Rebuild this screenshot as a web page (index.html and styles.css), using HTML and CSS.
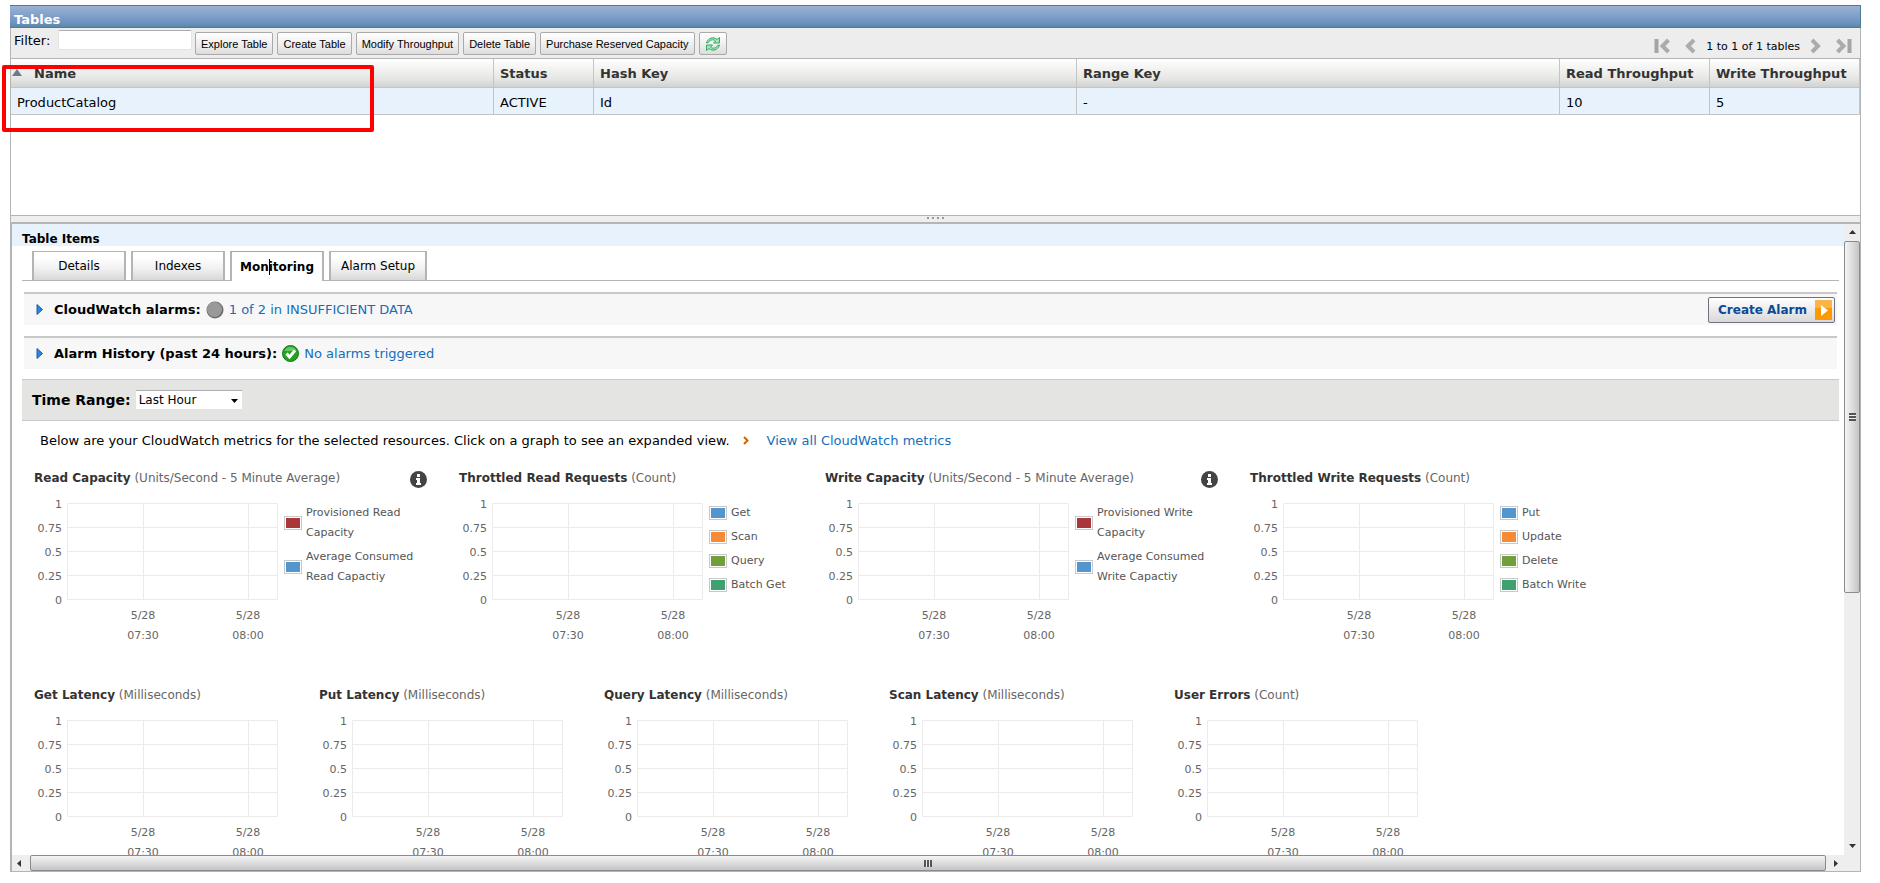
FILE: index.html
```html
<!DOCTYPE html>
<html lang="en">
<head>
    <meta charset="UTF-8">
    <meta name="viewport" content="width=device-width, initial-scale=1.0">
    <title>DynamoDB Tables</title>
    <link rel="stylesheet" href="styles.css">
</head>
<body>
    <div class="console">
        <h1 class="title-bar">Tables</h1>

        <!-- Toolbar -->
        <div class="toolbar">
            <label for="filter">Filter:</label>
            <input type="text" id="filter" class="filter">
            <div class="buttons">
                <button class="btn">Explore Table</button>
                <button class="btn">Create Table</button>
                <button class="btn">Modify Throughput</button>
                <button class="btn">Delete Table</button>
                <button class="btn">Purchase Reserved Capacity</button>
                <button class="btn btn-icon" aria-label="Refresh">
                    <svg width="16" height="16" viewBox="0 0 16 16" fill="none">
                        <path d="M1.500 7C3 1.500 9 0.500 12 3.500L14.500 1.500V7H8.500L10.500 5C8.500 3 5 3.500 3.500 6.500Z" fill="#a5e6bb" stroke="#37a862"/>
                        <path d="M14.500 9C13 14.500 7 15.500 4 12.500L1.500 14.500V9H7.500L5.500 11C7.500 13 11 12.500 12.500 9.500Z" fill="#a5e6bb" stroke="#37a862"/>
                    </svg>
                </button>
            </div>
            <div class="pager">
                <button class="page-btn" aria-label="First page"><svg width="16" height="16" viewBox="0 0 16 16"><path d="M2.500 1v14" stroke="#a3a5a6" stroke-width="4"/><path d="M14.500 2L8.500 8l6 6" fill="none" stroke="#a9abac" stroke-width="4"/></svg></button>
                <button class="page-btn" aria-label="Previous page"><svg width="11" height="16" viewBox="0 0 11 16"><path d="M9 2L3 8l6 6" fill="none" stroke="#a9abac" stroke-width="4"/></svg></button>
                <span>1 to 1 of 1 tables</span>
                <button class="page-btn" aria-label="Next page"><svg width="11" height="16" viewBox="0 0 11 16"><path d="M2 2l6 6-6 6" fill="none" stroke="#a9abac" stroke-width="4"/></svg></button>
                <button class="page-btn" aria-label="Last page"><svg width="16" height="16" viewBox="0 0 16 16"><path d="M13.500 1v14" stroke="#a3a5a6" stroke-width="4"/><path d="M1.500 2l6 6-6 6" fill="none" stroke="#a9abac" stroke-width="4"/></svg></button>
            </div>
        </div>

        <!-- Table list -->
        <div class="table-list">
            <table>
                <colgroup>
                    <col><col class="col-status"><col><col><col class="col-units"><col class="col-units">
                </colgroup>
                <thead>
                    <tr>
                        <th class="sorted"><svg width="10" height="7" viewBox="0 0 10 7"><path d="M5 0l5 7H0z" fill="#6c7c8c"/></svg>Name</th>
                        <th>Status</th>
                        <th>Hash Key</th>
                        <th>Range Key</th>
                        <th>Read Throughput</th>
                        <th>Write Throughput</th>
                    </tr>
                </thead>
                <tbody>
                    <tr>
                        <td>ProductCatalog</td>
                        <td>ACTIVE</td>
                        <td>Id</td>
                        <td>-</td>
                        <td>10</td>
                        <td>5</td>
                    </tr>
                </tbody>
            </table>
            <div class="highlight"></div>
        </div>

        <div class="splitter"><i></i><i></i><i></i><i></i></div>

        <!-- Table items -->
        <div class="panel">
            <div class="panel-view">
                <h2 class="panel-title">Table Items</h2>
                <div class="panel-body">
                    <div class="tabs">
                        <button class="tab">Details</button>
                        <button class="tab">Indexes</button>
                        <button class="tab active">Monitoring<span class="caret"></span></button>
                        <button class="tab">Alarm Setup</button>
                    </div>

                    <div class="alarm-row">
                        <svg class="expand" width="8" height="11" viewBox="0 0 8 11"><path d="M1 0.500L6.500 5.500 1 10.500z" fill="#2a86e0" stroke="#1a5fae"/></svg>
                        <strong>CloudWatch alarms:</strong>
                        <svg width="18" height="18" viewBox="0 0 18 18">
                            <circle cx="9" cy="9" r="8.500" fill="#6c6c6c"/>
                            <circle cx="8.500" cy="8.500" r="7.500" fill="#999"/>
                        </svg>
                        <a href="#">1 of 2 in INSUFFICIENT DATA</a>
                        <button class="create-alarm">Create Alarm
                            <svg width="17" height="20" viewBox="0 0 17 20"><path d="M0 0h17v8H0z" fill="#fbb447"/><path d="M0 8h17v12H0z" fill="#f90"/><path d="M6 5l7 5.500L6 16z" fill="#fff"/></svg>
                        </button>
                    </div>
                    <div class="alarm-row">
                        <svg class="expand" width="8" height="11" viewBox="0 0 8 11"><path d="M1 0.500L6.500 5.500 1 10.500z" fill="#2a86e0" stroke="#1a5fae"/></svg>
                        <strong>Alarm History (past 24 hours):</strong>
                        <svg width="17" height="17" viewBox="0 0 17 17">
                            <circle cx="8.500" cy="8.500" r="8" fill="#22a322" stroke="#167a18"/>
                            <path d="M2.500 6a6.500 6.500 0 0 1 12 0z" fill="#66c766"/>
                            <path d="M4.500 8.500l3 3.500 5.500-6.500" fill="none" stroke="#fff" stroke-width="3"/>
                        </svg>
                        <a href="#">No alarms triggered</a>
                    </div>

                    <div class="time-range">
                        <label for="range">Time Range:</label>
                        <div class="select-box">
                            <select id="range">
                                <option>Last Hour</option>
                                <option>Last 3 Hours</option>
                                <option>Last 24 Hours</option>
                            </select>
                            <svg width="7" height="4" viewBox="0 0 7 4"><path d="M0 0h7L3.500 4z" fill="#000"/></svg>
                        </div>
                    </div>

                    <p class="intro">Below are your CloudWatch metrics for the selected resources. Click on a graph to see an expanded view.
                        <svg width="6" height="9" viewBox="0 0 6 9"><path d="M1 1l3.500 3.500L1 8" fill="none" stroke="#c60" stroke-width="2"/></svg>
                        <a href="#">View all CloudWatch metrics</a>
                    </p>

                    <div class="charts" id="capacityCharts"></div>
                    <div class="charts" id="latencyCharts"></div>
                </div>
            </div>

            <div class="scroll-y">
                <svg width="7" height="5" viewBox="0 0 7 5"><path d="M3.500 0L7 4H0z" fill="#333"/></svg>
                <div class="track"><div class="thumb"></div></div>
                <svg width="7" height="5" viewBox="0 0 7 5"><path d="M0 0h7L3.500 4z" fill="#333"/></svg>
            </div>
            <div class="scroll-x">
                <svg width="5" height="7" viewBox="0 0 5 7"><path d="M4 0v7L0 3.500z" fill="#333"/></svg>
                <div class="track"><div class="thumb"></div></div>
                <svg width="5" height="7" viewBox="0 0 5 7"><path d="M0 0v7l4-3.500z" fill="#333"/></svg>
            </div>
            <div class="scroll-corner"></div>
        </div>
    </div>

    <script>
        const red = '#aa3639', blue = '#5395cd', orange = '#f68a35', green = '#729e3c', teal = '#3fa070';

        const capacity = [
            { name: 'Read Capacity', unit: 'Units/Second - 5 Minute Average', info: true,
              legend: [['Provisioned Read Capacity', red], ['Average Consumed Read Capactiy', blue]] },
            { name: 'Throttled Read Requests', unit: 'Count',
              legend: [['Get', blue], ['Scan', orange], ['Query', green], ['Batch Get', teal]] },
            { name: 'Write Capacity', unit: 'Units/Second - 5 Minute Average', info: true,
              legend: [['Provisioned Write Capacity', red], ['Average Consumed Write Capactiy', blue]] },
            { name: 'Throttled Write Requests', unit: 'Count',
              legend: [['Put', blue], ['Update', orange], ['Delete', green], ['Batch Write', teal]] }
        ];
        const latency = [
            { name: 'Get Latency', unit: 'Milliseconds' },
            { name: 'Put Latency', unit: 'Milliseconds' },
            { name: 'Query Latency', unit: 'Milliseconds' },
            { name: 'Scan Latency', unit: 'Milliseconds' },
            { name: 'User Errors', unit: 'Count' }
        ];

        const infoIcon = `<svg width="17" height="17" viewBox="0 0 17 17"><circle cx="8.500" cy="8.500" r="8.500" fill="#444"/>
            <path d="M7 3h3v3H7zM6 7h4v5h1v2H6v-2h1V9H6z" fill="#fff"/></svg>`;

        function chart(c) {
            const legend = (c.legend || []).map(([text, color]) =>
                `<li><span class="swatch" style="background-color: ${color}"></span>${text}</li>`).join('');
            return `
                <div class="chart ${c.info ? 'wide' : c.legend ? 'medium' : ''}">
                    <h3><span><b>${c.name}</b> (${c.unit})</span>${c.info ? infoIcon : ''}</h3>
                    <div class="chart-row">
                        <div class="y-axis"><span>1</span><span>0.75</span><span>0.5</span><span>0.25</span><span>0</span></div>
                        <div class="plot-area">
                            <svg width="211" height="97" viewBox="0 0 211 97">
                                <path d="M0.500 0.500h210v96H0.500zM0 24.500h211M0 48.500h211M0 72.500h211M76.500 0v97M181.500 0v97" fill="none" stroke="#ebebeb"/>
                            </svg>
                            <div class="x-axis"><span>5/28<br>07:30</span><span>5/28<br>08:00</span></div>
                        </div>
                        ${legend ? `<ul class="legend">${legend}</ul>` : ''}
                    </div>
                </div>`;
        }

        document.getElementById('capacityCharts').innerHTML = capacity.map(chart).join('');
        document.getElementById('latencyCharts').innerHTML = latency.map(chart).join('');
    </script>
</body>
</html>
```
FILE: styles.css
```css
* {
    box-sizing: border-box;
}
body {
    margin: 0;
    height: 100vh;
    padding: 5px 19px 11px 10px;
    font-family: Verdana, 'DejaVu Sans', sans-serif;
    font-size: 13px;
    background-color: #fff;
    color: #000;
}
h1, h2, h3, p, ul {
    margin: 0;
    padding: 0;
}
svg {
    display: block;
    flex: none;
}
a {
    color: #146eb9;
    text-decoration: none;
}
button {
    font-family: inherit;
    cursor: pointer;
}
.console {
    display: flex;
    flex-direction: column;
    height: 100%;
    border: 1px solid #b4b4b4;
    border-top: none;
}
.title-bar {
    height: 23px;
    flex: none;
    margin: 0 -1px;
    padding-left: 4px;
    border: 1px solid #4c7d95;
    border-left-width: 0;
    background: linear-gradient(#9ab2d6, #6d92c1 80%, #5a88a5);
    color: #fff;
    font-size: 13px;
    line-height: 28px;
}

/* Toolbar */
.toolbar {
    display: flex;
    align-items: flex-start;
    height: 31px;
    flex: none;
    padding: 2px 8px 0 3px;
    background-color: #ededee;
    border-bottom: 1px solid #b4b4b4;
}
.toolbar label {
    width: 44px;
    line-height: 22px;
}
.filter {
    width: 134px;
    height: 20px;
    border: 1px solid #e2e3e6;
    border-top-color: #abadb3;
    border-radius: 2px;
    background: #fff;
}
.buttons {
    display: flex;
    gap: 4px;
    padding: 2px 0 0 3px;
}
.btn {
    height: 23px;
    padding: 0 5px;
    border: 1px solid #aaa;
    border-radius: 2px;
    background: linear-gradient(#fff, #f0f0f0 50%, #ddd);
    font-family: 'Liberation Sans', Arial, sans-serif;
    font-size: 11px;
    color: #000;
}
.btn-icon {
    width: 28px;
}
.pager {
    display: flex;
    align-items: center;
    gap: 10px;
    margin-left: auto;
    padding-top: 8px;
    font-size: 11px;
}
.page-btn {
    padding: 0;
    border: none;
    background: none;
}
.page-btn:first-child {
    margin-right: 5px;
}
.page-btn:last-child {
    margin-left: 5px;
}

/* Table list */
.table-list {
    position: relative;
    height: 156px;
    flex: none;
}
table {
    width: 100%;
    table-layout: fixed;
    border-collapse: separate;
    border-spacing: 0;
}
.col-status {
    width: 100px;
}
.col-units {
    width: 150px;
}
th, td {
    padding: 0 6px;
    border-right: 1px solid #c4c4c4;
    border-bottom: 1px solid #c4c4c4;
    text-align: left;
    white-space: nowrap;
}
th {
    height: 29px;
    background: linear-gradient(#fff, #e6e6e4 70%, #d2d2d2);
    color: #333;
}
td {
    height: 27px;
    padding-top: 2px;
    background-color: #e8f2fc;
}
th.sorted svg {
    display: inline-block;
    margin: 0 12px 2px -5px;
}
.highlight {
    position: absolute;
    left: -9px;
    top: 6px;
    width: 372px;
    height: 67px;
    border: 4px solid #f00;
    border-radius: 2px;
    pointer-events: none;
}
.splitter {
    display: flex;
    justify-content: center;
    gap: 3px;
    height: 9px;
    flex: none;
    padding-top: 1px;
    border-top: 1px solid #b4b4b4;
    border-bottom: 2px solid #b4b4b4;
    background-color: #eee;
}
.splitter i {
    width: 2px;
    height: 2px;
    background-color: #999;
}

/* Bottom panel */
.panel {
    display: grid;
    grid-template-columns: minmax(0, 1fr) 16px;
    grid-template-rows: minmax(0, 1fr) 16px;
    flex: 1;
    min-height: 0;
    border-left: 1px solid #b4b4b4;
}
.panel-view {
    overflow: auto;
    scrollbar-width: none;
}
.panel-title {
    height: 22px;
    padding-left: 10px;
    background-color: #e8f2fc;
    font-size: 12px;
    line-height: 30px;
}
.panel-body {
    padding: 5px 5px 0 10px;
}
.tabs {
    display: flex;
    gap: 5px;
    padding-left: 10px;
    border-bottom: 1px solid #b4b4b4;
}
.tab {
    position: relative;
    min-width: 94px;
    height: 29px;
    padding: 0 10px;
    border: 2px solid #b4b4b4;
    border-width: 1px 2px 0;
    background: linear-gradient(#fff 20%, #f0f0f0 60%, #d8d8d8);
    font-size: 12px;
    color: #000;
}
.tab.active {
    margin-bottom: -1px;
    height: 30px;
    padding: 0 6px;
    border-top-color: #f90;
    background: #fff;
    font-weight: bold;
}
.caret {
    position: absolute;
    left: 37px;
    top: 7px;
    width: 1px;
    height: 16px;
    background-color: #000;
}
.alarm-row {
    display: flex;
    align-items: center;
    gap: 5px;
    height: 33px;
    margin: 11px 2px 0;
    padding: 0 2px 0 12px;
    border-top: 2px solid #c8c8c8;
    background-color: #f7f7f8;
}
.expand {
    margin-right: 5px;
}
.create-alarm {
    display: flex;
    align-items: center;
    gap: 8px;
    height: 26px;
    margin-left: auto;
    padding: 0 2px 0 9px;
    border: 1px solid #6f7080;
    border-radius: 2px;
    background: linear-gradient(#fff, #ececec 50%, #d8d8d8);
    color: #0b4a96;
    font-size: 12px;
    font-weight: bold;
}
.time-range {
    display: flex;
    align-items: center;
    gap: 4px;
    height: 42px;
    margin-top: 10px;
    padding-left: 10px;
    border-top: 1px solid #c8c8c8;
    border-bottom: 1px solid #c8c8c8;
    background-color: #e4e4e2;
    font-size: 14px;
    font-weight: bold;
}
.select-box {
    position: relative;
    display: flex;
}
.select-box svg {
    position: absolute;
    right: 5px;
    top: 9px;
    pointer-events: none;
}
select {
    appearance: none;
    width: 108px;
    height: 20px;
    padding: 0 3px;
    border: 1px solid #e2e3e6;
    border-top-color: #abadb3;
    border-radius: 2px;
    background-color: #fff;
    font-family: inherit;
    font-size: 12px;
    color: #000;
}
.intro {
    display: flex;
    align-items: center;
    gap: 13px;
    height: 38px;
    padding-left: 18px;
}
.intro a {
    margin-left: 5px;
}

/* Charts */
.charts {
    display: flex;
    height: 217px;
    padding: 8px 0 0 12px;
    color: #666;
}
.chart {
    width: 285px;
    flex: none;
}
.chart.wide {
    width: 425px;
}
.chart.medium {
    width: 366px;
}
.chart h3 {
    display: flex;
    justify-content: space-between;
    width: 393px;
    height: 26px;
    font-size: 12px;
    font-weight: normal;
    line-height: 22px;
    white-space: nowrap;
}
.chart h3 svg {
    margin-top: 4px;
}
.chart h3 b {
    color: #333;
}
.chart-row {
    display: flex;
    font-size: 11px;
}
.y-axis {
    display: flex;
    flex: none;
    flex-direction: column;
    width: 28px;
    margin-right: 5px;
    text-align: right;
    line-height: 24px;
}
.plot-area {
    width: 211px;
    flex: none;
    padding-top: 10px;
}
.x-axis {
    display: flex;
    justify-content: flex-end;
    gap: 41px;
    margin-top: 6px;
    line-height: 20px;
    text-align: center;
}
.x-axis span {
    width: 64px;
}
.x-axis span:last-child {
    margin-right: -2px;
}
.legend {
    display: flex;
    flex: 1;
    flex-direction: column;
    gap: 4px;
    max-width: 142px;
    padding: 10px 0 0 6px;
    list-style: none;
    line-height: 20px;
    color: #555;
}
.legend li {
    display: flex;
    align-items: center;
    gap: 4px;
}
.swatch {
    width: 18px;
    height: 14px;
    flex: none;
    border: 1px solid #c8c8c8;
    box-shadow: inset 0 0 0 1px #fff;
}

/* Scrollbars */
.scroll-y, .scroll-x {
    display: flex;
    align-items: center;
    justify-content: space-between;
    background-color: #eee;
}
.scroll-y {
    flex-direction: column;
    padding: 6px 0;
}
.scroll-x {
    padding: 0 5px;
}
.track {
    display: flex;
    flex: 1;
}
.scroll-y .track {
    width: 100%;
    margin: 6px 0;
}
.scroll-x .track {
    height: 100%;
    margin: 0 8px;
}
.thumb {
    display: flex;
    width: 100%;
    height: 100%;
    border: 1px solid #8a8a92;
    border-radius: 2px;
}
.scroll-y .thumb {
    height: 59%;
    background: linear-gradient(to right, #f5f5f5, #ddd 50%, #c4c4c6);
}
.scroll-x .thumb {
    background: linear-gradient(#f5f5f5, #ddd 50%, #c4c4c6);
}
.scroll-y .thumb::after {
    content: '';
    width: 7px;
    height: 8px;
    margin: auto;
    background: repeating-linear-gradient(#555 0 2px, #eee 2px 3px);
}
.scroll-x .thumb::after {
    content: '';
    width: 8px;
    height: 7px;
    margin: auto;
    background: repeating-linear-gradient(to right, #555 0 2px, #eee 2px 3px);
}
.scroll-corner {
    background-color: #eee;
}
```
